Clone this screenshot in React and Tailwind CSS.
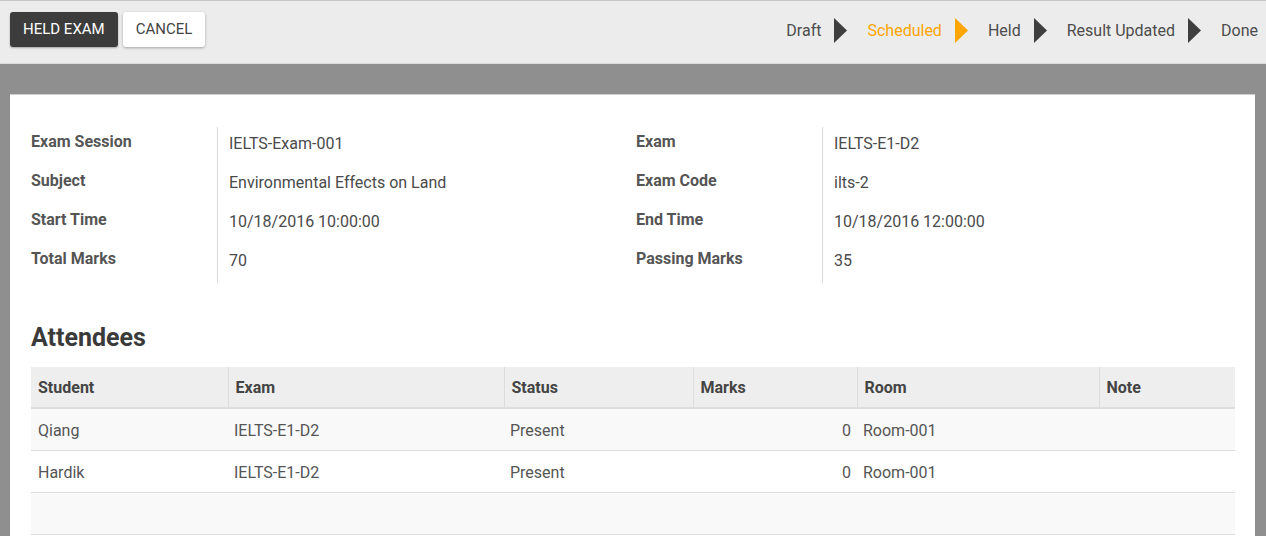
import React from 'react';

const steps = [
  { label: 'Draft' },
  { label: 'Scheduled', active: true },
  { label: 'Held' },
  { label: 'Result Updated' },
  { label: 'Done', last: true },
];

const leftInfo = [
  ['Exam Session', 'IELTS-Exam-001'],
  ['Subject', 'Environmental Effects on Land'],
  ['Start Time', '10/18/2016 10:00:00'],
  ['Total Marks', '70'],
];

const rightInfo = [
  ['Exam', 'IELTS-E1-D2'],
  ['Exam Code', 'ilts-2'],
  ['End Time', '10/18/2016 12:00:00'],
  ['Passing Marks', '35'],
];

const columns = [
  { name: 'Student', w: 'w-[197px]' },
  { name: 'Exam', w: 'w-[276px]' },
  { name: 'Status', w: 'w-[189px]' },
  { name: 'Marks', w: 'w-[164px]' },
  { name: 'Room', w: 'w-[242px]' },
  { name: 'Note', w: '' },
];

const attendees = [
  { student: 'Qiang', exam: 'IELTS-E1-D2', status: 'Present', marks: 0, room: 'Room-001' },
  { student: 'Hardik', exam: 'IELTS-E1-D2', status: 'Present', marks: 0, room: 'Room-001' },
];

function Arrow({ active }) {
  return (
    <svg width="13" height="25" viewBox="0 0 13 25" className="ml-[13px] mr-[20px]">
      <polygon points="0,0 13,12.5 0,25" fill={active ? '#ffa500' : '#3f3f3f'} />
    </svg>
  );
}

function InfoGroup({ rows }) {
  return (
    <div className="flex">
      <div className="w-[187px] border-r border-[#d9d9d9]">
        {rows.map(([label]) => (
          <div key={label} className="h-[39px] pt-[5px] text-[16px] leading-[20px] font-bold text-[#555]">
            {label}
          </div>
        ))}
      </div>
      <div className="pl-[11px]">
        {rows.map(([label, value]) => (
          <div key={label} className="h-[39px] pt-[7px] text-[16px] leading-[20px] text-[#4a4a4a]">
            {value}
          </div>
        ))}
      </div>
    </div>
  );
}

export default function App() {
  return (
    <div className="w-[1266px] h-[536px] overflow-hidden bg-[#8f8f8f] font-['Roboto',sans-serif]">
      {/* Control bar */}
      <div className="h-[64px] bg-[#ececec] border-t border-[#c6c6c6] border-b border-b-[#dcdcdc] flex items-start justify-between pl-[10px]">
        <div className="flex gap-[5px] mt-[11px]">
          <button className="h-[35px] px-[13px] rounded-[3px] bg-[#3c3c3c] text-white text-[15px] shadow-[0_1px_2px_rgba(0,0,0,0.3)]">
            HELD EXAM
          </button>
          <button className="h-[35px] px-[13px] rounded-[3px] bg-white text-[#444] text-[15px] shadow-[0_1px_3px_rgba(0,0,0,0.3)]">
            CANCEL
          </button>
        </div>
        <div className="flex items-center mt-[17px] pr-[8px] text-[16px]">
          {steps.map((s) => (
            <React.Fragment key={s.label}>
              <span className={s.active ? 'text-[#ffa500]' : 'text-[#4d4d4d]'}>{s.label}</span>
              {!s.last && <Arrow active={s.active} />}
            </React.Fragment>
          ))}
        </div>
      </div>

      {/* Sheet */}
      <div className="mt-[30px] ml-[10px] w-[1245px] h-[460px] bg-white border-t border-[#d0d0d0] pl-[21px] pr-[20px] pt-[32px]">
        <div className="grid grid-cols-[605px_1fr]">
          <InfoGroup rows={leftInfo} />
          <InfoGroup rows={rightInfo} />
        </div>

        <h2 className="mt-[39px] mb-[13px] text-[25px] leading-[32px] font-bold text-[#3a3a3a]">Attendees</h2>

        <table className="w-full border-collapse text-[16px] table-fixed">
          <thead>
            <tr className="bg-[#eeeeee] h-[41px] border-b-2 border-[#dddddd]">
              {columns.map((c, i) => (
                <th
                  key={c.name}
                  className={`${c.w} text-left font-bold text-[#444] px-[7px] pt-[2px] ${i > 0 ? 'border-l border-[#dddddd]' : ''}`}
                >
                  {c.name}
                </th>
              ))}
            </tr>
          </thead>
          <tbody className="text-[#555]">
            {attendees.map((a, i) => (
              <tr key={a.student} className={`h-[42px] border-b border-[#dddddd] ${i % 2 === 0 ? 'bg-[#f9f9f9]' : 'bg-white'}`}>
                <td className="px-[7px] pt-[3px]">{a.student}</td>
                <td className="px-[6px] pt-[3px]">{a.exam}</td>
                <td className="px-[6px] pt-[3px]">{a.status}</td>
                <td className="px-[6px] pt-[3px] text-right">{a.marks}</td>
                <td className="px-[6px] pt-[3px]">{a.room}</td>
                <td className="px-[6px] pt-[3px]"></td>
              </tr>
            ))}
            <tr className="h-[42px] border-b border-[#dddddd] bg-[#f9f9f9]">
              <td></td>
              <td></td>
              <td></td>
              <td></td>
              <td></td>
              <td></td>
            </tr>
          </tbody>
        </table>
      </div>
    </div>
  );
}
